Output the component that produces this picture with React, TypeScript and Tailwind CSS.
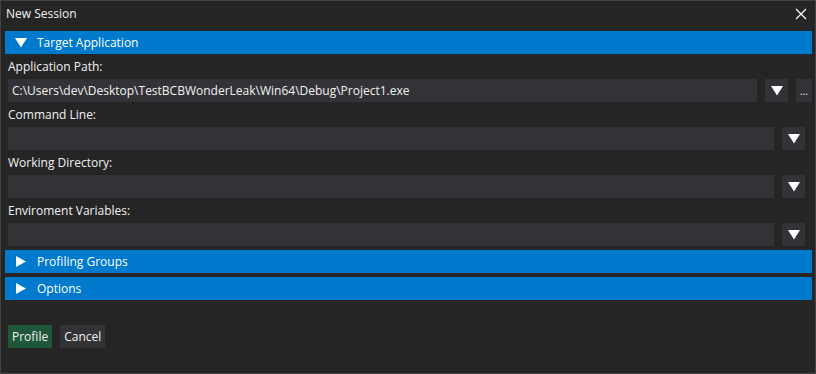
import React from "react";

const Tri: React.FC<{ dir: "down" | "right" }> = ({ dir }) => (
  <svg width="12" height="11" viewBox="0 0 12 11" className="shrink-0">
    {dir == "down" ? (
      <polygon points="0,1 12,1 6,10.5" fill="white" />
    ) : (
      <polygon points="1,0 11,5.5 1,11" fill="white" />
    )}
  </svg>
);

const Section: React.FC<{ title: string; open?: boolean }> = ({ title, open }) => (
  <div className="h-[23px] bg-[#007acc] flex items-center pl-[10px] gap-x-[10px] text-white">
    <Tri dir={open ? "down" : "right"} />
    <span>{title}</span>
  </div>
);

const Field: React.FC<{ label: string; value?: string; browse?: boolean }> = ({
  label,
  value,
  browse,
}) => (
  <div className="flex flex-col">
    <div className="h-[25px] pl-[3px] flex items-center text-[#f1f1f1]">{label}</div>
    <div className="flex flex-row items-center h-[23px] pl-[3px]">
      <div className="flex-1 h-full bg-[#333337] flex items-center px-[4px] text-[#f1f1f1] whitespace-nowrap overflow-hidden">
        {value}
      </div>
      <div className={`ml-[8px] w-[23px] h-full bg-[#333337] flex items-center justify-center ${browse ? "" : "mr-[7px]"}`}>
        <Tri dir="down" />
      </div>
      {browse && (
        <div className="ml-[8px] w-[16px] h-full bg-[#333337] flex items-center justify-center text-[#f1f1f1] text-[10px] leading-none">
          ...
        </div>
      )}
    </div>
  </div>
);

export default function App() {
  return (
    <div
      className="w-[816px] h-[374px] bg-[#252526] border border-[#434346] text-[12px] flex flex-col"
      style={{ fontFamily: '"Open Sans", "Noto Sans", sans-serif' }}
    >
      <div className="h-[25px] flex items-center justify-between pl-[5px] pr-[8px] text-[#f1f1f1]">
        <span>New Session</span>
        <svg width="12" height="12" viewBox="0 0 12 12">
          <path d="M1 1 L11 11 M11 1 L1 11" stroke="white" strokeWidth="1.2" />
        </svg>
      </div>
      <div className="px-[4px] pr-[3px] flex flex-col">
        <div className="mt-[5px]">
          <Section title="Target Application" open />
        </div>
        <div className="flex flex-col">
          <Field
            label="Application Path:"
            value="C:\Users\dev\Desktop\TestBCBWonderLeak\Win64\Debug\Project1.exe"
            browse
          />
          <Field label="Command Line:" />
          <Field label="Working Directory:" />
          <Field label="Enviroment Variables:" />
        </div>
        <div className="mt-[4px] flex flex-col gap-y-[4px]">
          <Section title="Profiling Groups" />
          <Section title="Options" />
        </div>
        <div className="mt-[25px] pl-[3px] flex flex-row gap-x-[8px]">
          <button className="h-[23px] px-[4px] bg-[#1e5838] text-[#f1f1f1]">Profile</button>
          <button className="h-[23px] px-[4px] bg-[#333337] text-[#f1f1f1]">Cancel</button>
        </div>
      </div>
    </div>
  );
}
